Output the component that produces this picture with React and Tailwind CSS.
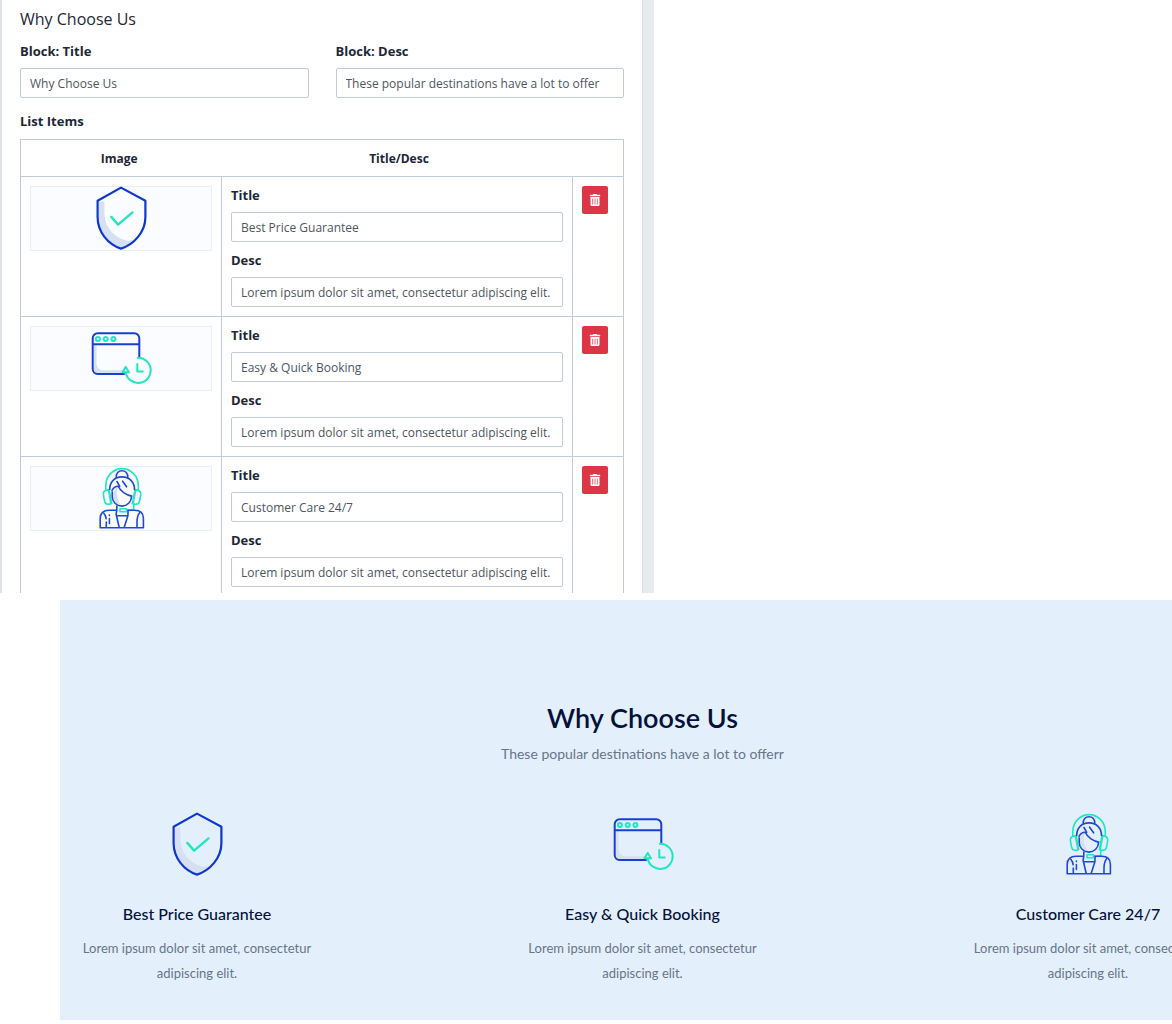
import { FaTrashAlt } from "react-icons/fa";

function ShieldIcon() {
  return (
    <svg viewBox="0 0 64 64" className="size-16 shrink-0" fill="none" strokeLinejoin="round" strokeLinecap="round" aria-hidden="true">
      <path d="M10 15.5h5.4V27C15.5 41 25 51.5 38 54.8c2 .3 5-.9 6.5-1.3C41 58 36 61 32 62.500 18 57 9.500 45 10 31z" fill="#d5e0f3" />
      <path d="M32 1.600 8.600 14.700V31C8.600 46 19 58.500 32 62.600 45 58.500 56.400 46 56.400 31V14.700z" stroke="#0f37cf" strokeWidth="2.200" />
      <path d="m22.300 30.900 6.800 7.700 14.400-12.200" stroke="#21e6c1" strokeWidth="2.400" />
    </svg>
  );
}

function BookingIcon() {
  return (
    <svg viewBox="0 0 64 64" className="size-16 shrink-0" fill="none" strokeLinejoin="round" strokeLinecap="round" aria-hidden="true">
      <path d="M5 19h2.500v18c0 4 3 7.300 7 7.300h19.500l1 3.200H9c-2.500 0-4-1.500-4-4z" fill="#d5e0f3" />
      <path d="M35 48H8.700a5 5 0 0 1-5-5V12.300a5 5 0 0 1 5-5h36.600a5 5 0 0 1 5 5V31M3.700 18.300h46.600" stroke="#1a3fd0" strokeWidth="2" />
      <g stroke="#21e6c1" strokeWidth="2">
        <circle cx="8.900" cy="13" r="2" />
        <circle cx="16.700" cy="13" r="2" />
        <circle cx="24.400" cy="13" r="2" />
        <path d="M48.800 31.700A12.600 12.600 0 1 1 36.800 47M36.700 40.900l3.300 5.400h-6.600zM48.300 38v7.500h5.500" />
      </g>
    </svg>
  );
}

function SupportIcon() {
  return (
    <svg viewBox="0 0 64 64" className="size-16 shrink-0" fill="none" strokeLinejoin="round" strokeLinecap="round" aria-hidden="true">
      <path d="M24 27c1-3.500 2.500-5 5-5.500-1.600 3-2.200 11 2.800 17.300C26 38 23.500 32 24 27z" fill="#d5e0f3" />
      <g stroke="#21e6c1" strokeWidth="1.600">
        <path d="M16.800 24v-4.500a16.200 16.800 0 0 1 32.500 0V24" />
        <path d="M17.600 24.100c-2.600.5-3.600 2.500-3.100 5.400l1 5.300c.5 2.500 2.200 3.700 4.600 3.300l2.600-.5-2.600-14zM19.400 24l2.500 13.400" />
        <path d="M48.500 24.100c2.600.5 3.600 2.500 3.100 5.400l-1 5.300c-.5 2.500-2.200 3.700-4.600 3.300l-2.600-.5 2.600-14zM46.700 24l-2.500 13.400" />
        <path d="M44.700 38.200v5.900h-7.200M31 42.700h6.500v3H31z" />
      </g>
      <g stroke="#2148d4" strokeWidth="1.600">
        <path d="M27.300 11.800C26.800 7 29.600 4.700 33 4.700s6.200 2.300 5.700 7.100" />
        <path d="M20.700 23.500c0-7.500 5-12.600 12.300-12.600s12.500 5.100 12.500 12.600" />
        <path d="M23 24.500c1.400-3.300 3.400-4.200 6.300-4.300 2 5.200 8.700 9.300 13.500 9.900M23.200 26v4.500c0 5.300 4.300 9.600 9.700 9.600s9.600-4.300 9.600-9.600" />
        <path d="m28 15.500 2.700 4.800M33.600 15.200l4 5.600" />
        <path d="M27.800 40v4l-.7 4.300 3.200 13.400M27.800 44.300H20c-5.600 0-8.800 2.700-8.800 8v9.400h43.200v-9.400c0-5.300-3.200-8-8.800-8h-6.500l-.2 5.400-3.800 12M27.500 49.700h11.400" />
        <path d="M14.800 47.200c1.400 1.700 2.200 3.500 2.400 5.600M17.300 56v5.500M50.800 46.500c-2.300 2.800-2.800 6-2.800 9.500v5.500M20.400 49v.6M20.400 52.500v5" />
      </g>
    </svg>
  );
}

const lorem = "Lorem ipsum dolor sit amet, consectetur adipiscing elit.";

const items = [
  { id: "price", title: "Best Price Guarantee", desc: lorem, Icon: ShieldIcon },
  { id: "booking", title: "Easy & Quick Booking", desc: lorem, Icon: BookingIcon },
  { id: "care", title: "Customer Care 24/7", desc: lorem, Icon: SupportIcon },
];

function Field({ id, label, value }) {
  return (
    <div className="flex flex-col gap-2">
      <label htmlFor={id} className="text-[13px] leading-[18px] font-bold text-[#1b2838]">
        {label}
      </label>
      <input
        id={id}
        type="text"
        defaultValue={value}
        className="h-[30px] w-full rounded-xs border border-[#c2cad8] bg-white px-[9px] text-xs text-[#4d5660] outline-none focus:border-blue-400"
      />
    </div>
  );
}

function BlockEditor() {
  return (
    <section className="w-full max-w-[654px] border-r-11 border-l-2 border-r-[#e7ebee] border-l-[#dee3e7] bg-white font-['Open_Sans',sans-serif]">
      <div className="border-r border-[#d9dfe4] px-[18px]">
        <h2 className="pt-[7px] pb-[11px] text-base leading-6 text-[#1b2838]">Why Choose Us</h2>
        <div className="grid grid-cols-2 gap-[27px]">
          <Field id="block-title" label="Block: Title" value="Why Choose Us" />
          <Field id="block-desc" label="Block: Desc" value="These popular destinations have a lot to offer" />
        </div>
        <h3 className="mt-3.5 mb-[9px] text-[13px] leading-[18px] font-bold text-[#1b2838]">List Items</h3>
        <table className="w-full table-fixed border-collapse border-x border-t border-[#c2cad8]">
          <colgroup>
            <col className="w-1/3" />
            <col />
            <col className="w-[51px]" />
          </colgroup>
          <thead>
            <tr className="h-[37px] text-xs font-bold text-[#1b2838]">
              <th scope="col" className="pt-0.5 pr-1">Image</th>
              <th scope="col" className="pt-0.5 pl-1">Title/Desc</th>
              <td />
            </tr>
          </thead>
          <tbody>
            {items.map(({ id, title, desc, Icon }) => (
              <tr key={id} className="group border-t border-[#c2cad8] align-top">
                <td className="border-r border-[#c2cad8] px-[9px] pt-[9px]">
                  <div className="flex h-[65px] items-end justify-center border border-[#e9eef3] bg-[#fafcff]">
                    <Icon />
                  </div>
                </td>
                <td className="border-r border-[#c2cad8] p-[9px] group-last:pb-1.5">
                  <div className="flex flex-col gap-[9px]">
                    <Field id={`${id}-title`} label="Title" value={title} />
                    <Field id={`${id}-desc`} label="Desc" value={desc} />
                  </div>
                </td>
                <td className="px-[9px] pt-[9px]">
                  <button
                    type="button"
                    aria-label={`Delete ${title}`}
                    className="flex h-7 w-[26px] items-center justify-center rounded-xs bg-[#dc3545] text-xs text-white hover:bg-red-700"
                  >
                    <FaTrashAlt />
                  </button>
                </td>
              </tr>
            ))}
          </tbody>
        </table>
      </div>
    </section>
  );
}

function WhyChooseUs() {
  return (
    <section className="mt-[7px] ml-[60px] overflow-hidden bg-[#e3f0fc] font-[Lato,sans-serif]">
      <div className="-mr-[53px] pt-[100px] pb-[34px] text-center">
        <h2 className="text-[27px] leading-9 font-semibold text-[#05103b]">Why Choose Us</h2>
        <p className="mt-2 text-sm leading-5 text-[#697488]">These popular destinations have a lot to offerr</p>
        <div className="mt-12 flex justify-between">
          {items.map(({ id, title, desc, Icon }) => (
            <article key={id} className="flex w-[274px] flex-col items-center px-4">
              <Icon />
              <h3 className="mt-[26px] text-base leading-6 font-medium text-[#05103b]">{title}</h3>
              <p className="mt-2.5 text-[13px] leading-[25px] text-[#697488]">{desc}</p>
            </article>
          ))}
        </div>
      </div>
    </section>
  );
}

export default function App() {
  return (
    <main className="w-full overflow-x-hidden bg-white">
      <BlockEditor />
      <WhyChooseUs />
    </main>
  );
}
